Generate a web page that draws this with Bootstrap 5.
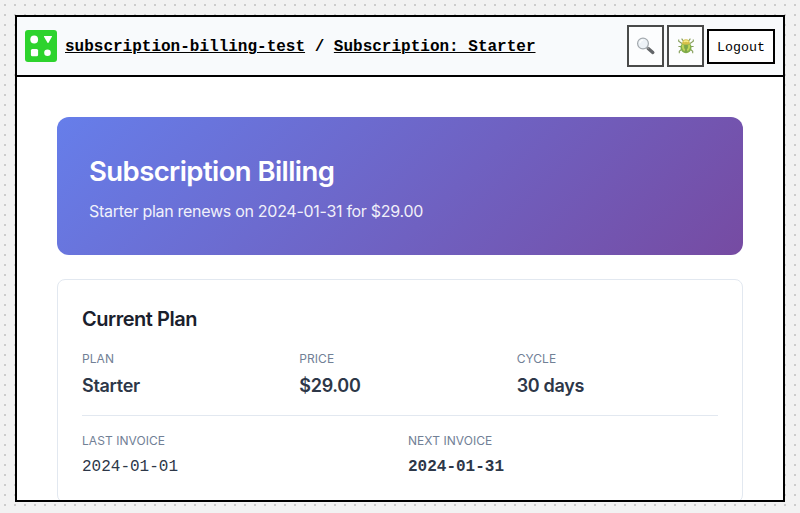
<!DOCTYPE html>
<html lang="en">
<head>
<meta charset="utf-8">
<meta name="viewport" content="width=device-width, initial-scale=1">
<title>Subscription: Starter</title>
<link href="https://cdn.jsdelivr.net/npm/bootstrap@5.3.0/dist/css/bootstrap.min.css" rel="stylesheet">
<style>
body{height:100vh;padding:15px 15px 11px;overflow:hidden;font-family:Inter,sans-serif;color:#2d3748;background:#f2f2f2 conic-gradient(from 270deg at 2px 2px,#ccc 90deg,transparent 0) 4px 4px/10px 10px}
.frame{border:2px solid #000;background:#fff}
.topbar{height:60px;flex:none;padding:0 8px;background:#f8fafc;border-bottom:2px solid #000;color:#000}
.crumbs,.tool{font-family:"Liberation Mono",monospace}
.crumbs{font-size:16px;font-weight:700;line-height:24px;padding-top:2px;white-space:pre}
.crumbs a{color:#000;text-decoration:underline;text-decoration-thickness:1px;text-underline-offset:1px}
.tools{gap:3px}
.tool{border:2px solid #000;border-radius:0;background:#fff;color:#000;padding:0;font-size:13.333px;line-height:1}
.tool-icon{width:37px;height:42px;opacity:.7}
.tool-text{width:68px;height:35px;padding-top:3px}
.content{padding:40px}
.hero{height:138px;flex:none;padding:36px 32px;border-radius:12px;color:#fff;background:linear-gradient(135deg,#667eea,#764ba2)}
.hero h1{font-size:27.5px;font-weight:600;line-height:36px;letter-spacing:-.58px;margin-bottom:10px}
.hero p{font-size:16px;line-height:24px;opacity:.9;letter-spacing:-.29px;margin:0}
.plan{height:224px;flex:none;margin-top:24px;padding:24px;border:1px solid #e2e8f0;border-radius:8px}
.plan h2{font-size:20px;font-weight:600;line-height:30px;letter-spacing:-.47px;color:#1a202c;margin-bottom:16px}
.caption{font-size:12px;line-height:18px;letter-spacing:.06px;color:#718096}
.value{font-size:18px;font-weight:600;line-height:27px;margin-top:4px;letter-spacing:-.3px}
.invoices{border-top:1px solid #e2e8f0;margin-top:16px;padding-top:16px}
.date{font-family:"Liberation Mono",monospace;font-size:16px;line-height:24px;margin-top:5px}
</style>
<script src="https://cdn.jsdelivr.net/npm/bootstrap@5.3.0/dist/js/bootstrap.bundle.min.js"></script>
</head>
<body>
<div class="frame d-flex flex-column h-100 overflow-hidden">
  <header class="topbar d-flex align-items-center">
    <svg class="me-2" width="32" height="32" viewBox="0 0 32 32"><rect width="32" height="32" rx="3" fill="#2dd32d"/><g fill="#fff"><circle cx="9.2" cy="9.5" r="3.9"/><path d="M19.3 6h7.4q.5.2.2.8L23.5 12.8q-.5.6-1 0L19 6.8q-.2-.6.3-.8Z"/><rect x="5.9" y="19" width="7.2" height="7.2" rx="1.5"/><circle cx="22.5" cy="22.8" r="3.3"/></g></svg>
    <nav class="crumbs"><a href="#">subscription-billing-test</a> / <a href="#">Subscription: Starter</a></nav>
    <div class="tools d-flex align-items-center ms-auto">
      <button class="btn tool tool-icon d-flex align-items-center justify-content-center" aria-label="Search"><svg width="20" height="20" viewBox="0 0 20 20"><path d="m12.2 12.5 4.6 4" stroke="#24272b" stroke-width="3.4" stroke-linecap="round"/><path d="m11 11.2 1.8 1.5" stroke="#666" stroke-width="1.7"/><circle cx="7" cy="7.5" r="5.4" fill="#e9f0f5" stroke="#7f878e" stroke-width="1.2"/><path d="M3.9 7a3.4 3.4 0 0 1 3.1-2.9" fill="none" stroke="#fff" stroke-width="1.2"/></svg></button>
      <button class="btn tool tool-icon d-flex align-items-center justify-content-center" aria-label="Debug"><svg width="20" height="20" viewBox="0 0 20 20"><g fill="none" stroke="#567817" stroke-width="1.1"><path d="M7.5 5.2 5.6 2.7M12.5 5.2l1.9-2.5M6 7.5 2.7 5.2V3.4M14 7.5l3.3-2.3V3.4M5.5 10.5H2.4M14.5 10.5h3.1M6 13l-2.7 2.2v2M14 13l2.7 2.2v2"/></g><ellipse cx="10" cy="11.5" rx="5.5" ry="5.8" fill="#4f8f00"/><path d="M6.8 8.5q-.3 4.2 2 6M13.2 8.5q.3 4.2-2 6" fill="none" stroke="#a9c514" stroke-width="1.8"/><path d="M6 7.8q.4-4.5 4-4.6 3.6.1 4 4.6-4 2.2-8 0Z" fill="#c9a800"/><path d="M7.7 5.8q2.3-1.6 4.6 0" fill="none" stroke="#f7e75b" stroke-width="1.3"/><path d="M10 8.5v8" stroke="#447000" stroke-width=".8"/></svg></button>
      <button class="btn tool tool-text">Logout</button>
    </div>
  </header>
  <main class="content d-flex flex-column">
    <section class="hero"><h1>Subscription Billing</h1><p>Starter plan renews on 2024-01-31 for $29.00</p></section>
    <section class="plan">
      <h2>Current Plan</h2>
      <div class="row gx-3">
        <div class="col-4"><div class="caption">PLAN</div><div class="value">Starter</div></div>
        <div class="col-4"><div class="caption">PRICE</div><div class="value">$29.00</div></div>
        <div class="col-4"><div class="caption">CYCLE</div><div class="value">30 days</div></div>
      </div>
      <div class="invoices"><div class="row gx-3">
        <div class="col-6"><div class="caption">LAST INVOICE</div><div class="date">2024-01-01</div></div>
        <div class="col-6"><div class="caption">NEXT INVOICE</div><div class="date fw-bold">2024-01-31</div></div>
      </div></div>
    </section>
  </main>
</div>
</body>
</html>
